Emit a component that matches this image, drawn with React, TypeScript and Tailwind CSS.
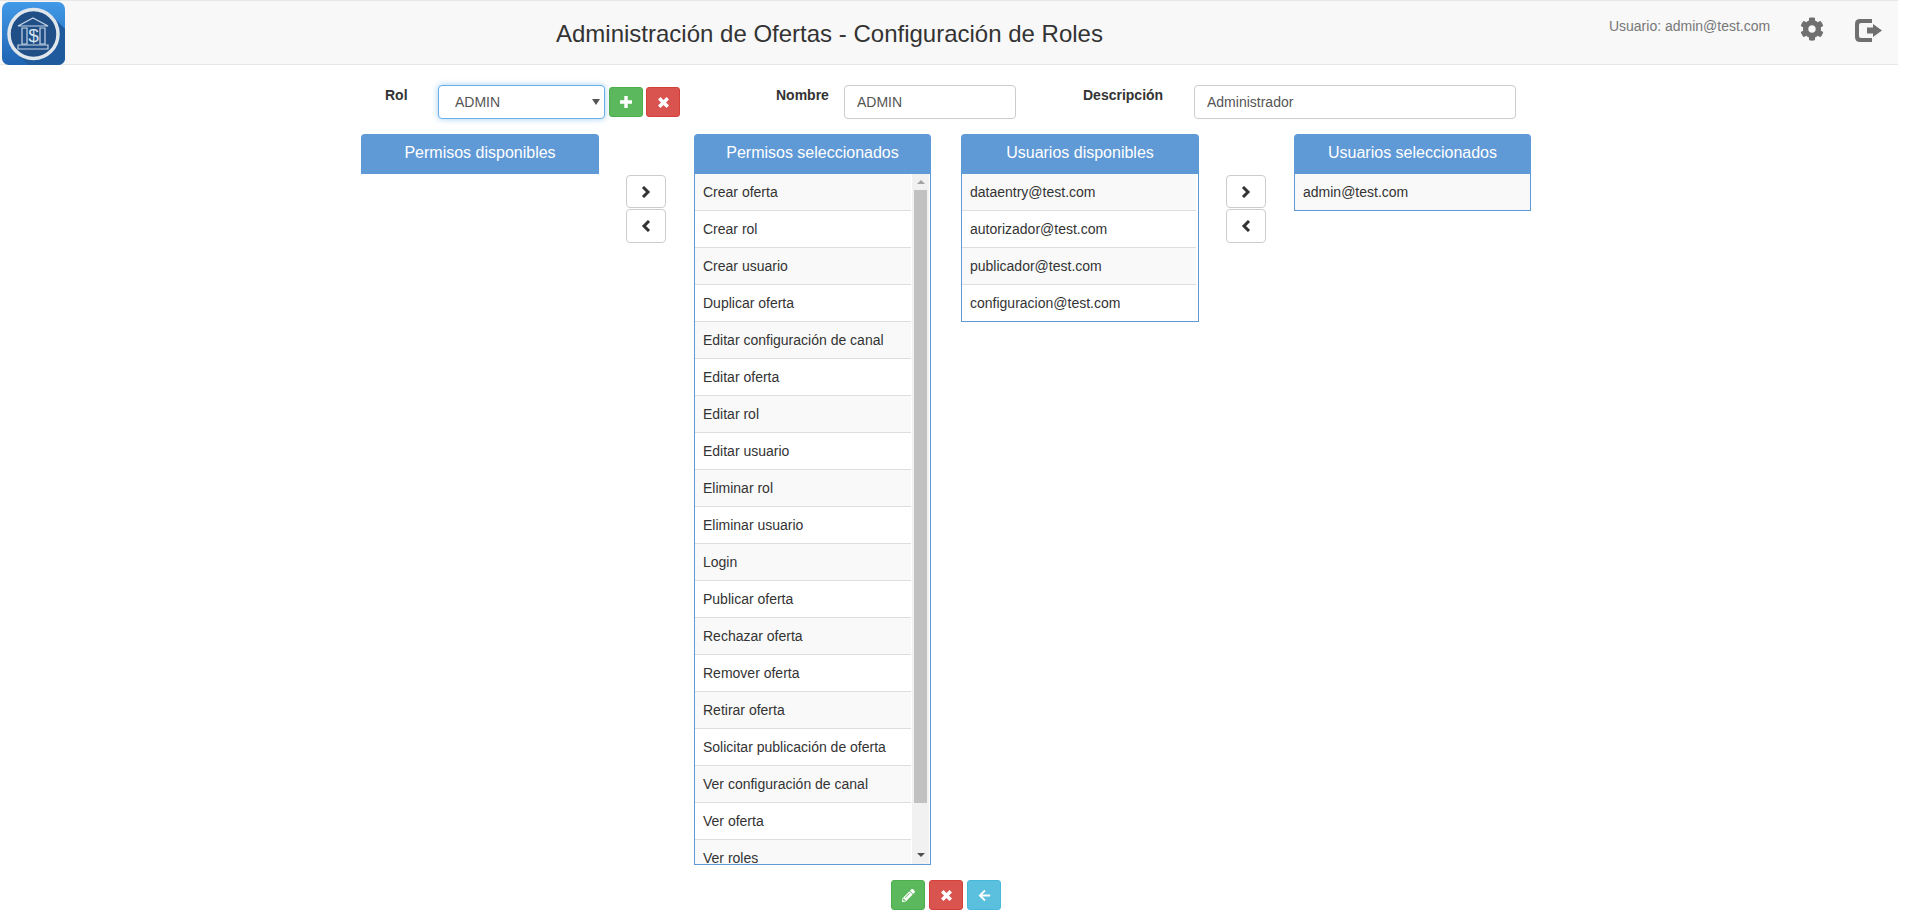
import React from 'react';
import { FaArrowLeft, FaCog, FaPencilAlt } from 'react-icons/fa';

const permisos = [
  'Crear oferta', 'Crear rol', 'Crear usuario', 'Duplicar oferta', 'Editar configuración de canal',
  'Editar oferta', 'Editar rol', 'Editar usuario', 'Eliminar rol', 'Eliminar usuario', 'Login',
  'Publicar oferta', 'Rechazar oferta', 'Remover oferta', 'Retirar oferta',
  'Solicitar publicación de oferta', 'Ver configuración de canal', 'Ver oferta', 'Ver roles',
];

const usuariosDisponibles = ['dataentry@test.com', 'autorizador@test.com', 'publicador@test.com', 'configuracion@test.com'];

const Logo: React.FC = () => (
  <svg width="63" height="63" viewBox="0 0 63 63" className="ml-[2px] mt-px shrink-0">
    <defs>
      <linearGradient id="logoBg" x1="0" y1="0" x2="0" y2="1">
        <stop offset="0" stopColor="#429ae8" />
        <stop offset="1" stopColor="#1e63b2" />
      </linearGradient>
      <clipPath id="logoClip">
        <rect width="63" height="63" rx="7" />
      </clipPath>
    </defs>
    <g clipPath="url(#logoClip)">
      <rect width="63" height="63" fill="url(#logoBg)" />
      <path d="M50 14 L63 27 V63 H26 L13 50 Z" fill="#1f5a9c" />
    </g>
    <circle cx="31.5" cy="32" r="24.5" fill="#1f4f86" stroke="#dfe6ec" strokeWidth="3.5" />
    <g fill="none" stroke="#c6d6e6" strokeWidth="1.2">
      <path d="M16 24 L31 16 L46 24 Z" />
      <path d="M20 26 H25 V42 H20 Z M38 26 H43 V42 H38 Z" />
      <path d="M16 43 H46 V47 H16 Z" />
    </g>
    <text x="31.5" y="40" textAnchor="middle" fontSize="19" fill="#d6e2ee" fontFamily="Liberation Sans, sans-serif">$</text>
  </svg>
);

const LogoutIcon: React.FC = () => (
  <svg width="27" height="23" viewBox="0 0 27 23" className="ml-[31px] mt-[18px] text-[#707070]" fill="currentColor">
    <path d="M5 0 H17 V4 H6 Q4 4 4 6 V17 Q4 19 6 19 H17 V23 H5 Q0 23 0 18 V5 Q0 0 5 0 Z" />
    <path d="M12 8.5 H18 V5 L27 11.5 L18 18 V14.5 H12 Z" />
  </svg>
);

// glyphicon-like heavy shapes
const PlusIcon: React.FC = () => (
  <svg width="12" height="12" viewBox="0 0 12 12" fill="currentColor">
    <path d="M4.3 0 H7.7 V4.3 H12 V7.7 H7.7 V12 H4.3 V7.7 H0 V4.3 H4.3 Z" />
  </svg>
);

const RemoveIcon: React.FC = () => (
  <svg width="11" height="11" viewBox="0 0 11 11" fill="currentColor">
    <path d="M2.5 0 L5.5 3 L8.5 0 L11 2.5 L8 5.5 L11 8.5 L8.5 11 L5.5 8 L2.5 11 L0 8.5 L3 5.5 L0 2.5 Z" />
  </svg>
);

const ChevronIcon: React.FC<{ left?: boolean }> = ({ left }) => (
  <svg width="10" height="12" viewBox="0 0 10 12" fill="none" stroke="currentColor" strokeWidth="3" className={left ? 'rotate-180' : ''}>
    <path d="M2 1 L7 6 L2 11" />
  </svg>
);

const PanelHeader: React.FC<{ title: string }> = ({ title }) => (
  <div className="h-[40px] pb-[3px] rounded-t bg-[#5f99d6] text-white text-base flex items-center justify-center">{title}</div>
);

const Row: React.FC<{ text: string; index: number; last?: boolean; inset?: boolean }> = ({ text, index, last, inset }) => (
  <div className={`${inset ? 'mr-[2px]' : ''} ${index % 2 === 0 ? 'bg-[#f9f9f9]' : 'bg-white'} ${last ? 'h-[36px]' : 'h-[37px] border-b border-[#dddddd]'} shrink-0 px-2 flex items-center text-sm text-[#333333] whitespace-nowrap`}>
    {text}
  </div>
);

const ArrowButtons: React.FC = () => (
  <div className="w-[40px] mt-[41px] flex flex-col gap-px">
    <button className="h-[33px] rounded border border-[#cccccc] bg-white flex items-center justify-center text-[#333333]">
      <ChevronIcon />
    </button>
    <button className="h-[34px] rounded border border-[#cccccc] bg-white flex items-center justify-center text-[#333333]">
      <ChevronIcon left />
    </button>
  </div>
);

const App: React.FC = () => {
  return (
    <div className="w-[1898px] h-[916px] bg-white font-['Liberation_Sans',Arial,sans-serif] text-[#333333] overflow-hidden">
      <header className="h-[65px] bg-[#f8f8f8] border-y border-[#e7e7e7] flex items-start -mb-px">
        <Logo />
        <h1 className="ml-[491px] mt-[18px] text-2xl leading-[30px] font-normal text-[#333333] whitespace-nowrap">
          Administración de Ofertas - Configuración de Roles
        </h1>
        <div className="ml-[506px] mt-[15px] text-sm leading-5 text-[#777777] whitespace-nowrap">Usuario: admin@test.com</div>
        <FaCog size={24} className="ml-[30px] mt-[16px] text-[#707070]" />
        <LogoutIcon />
      </header>

      <div className="mt-[21px] h-[49px] pl-[385px] flex items-start text-sm">
        <label className="w-[53px] font-bold leading-5">Rol</label>
        <div className="relative w-[167px] h-[34px]">
          <select className="w-full h-full appearance-none rounded border border-[#66afe9] bg-white pl-4 text-sm text-[#555555] shadow-[0_0_6px_rgba(102,175,233,0.6)] outline-none">
            <option>ADMIN</option>
          </select>
          <span className="absolute right-[5px] top-[14px] w-0 h-0 border-x-[4px] border-x-transparent border-t-[6px] border-t-[#555555]" />
        </div>
        <button className="ml-[4px] mt-[2px] w-[34px] h-[30px] rounded-[3px] border border-[#4cae4c] bg-[#5cb85c] text-white flex items-center justify-center">
          <PlusIcon />
        </button>
        <button className="ml-[3px] mt-[2px] w-[34px] h-[30px] rounded-[3px] border border-[#d43f3a] bg-[#d9534f] text-white flex items-center justify-center">
          <RemoveIcon />
        </button>
        <label className="ml-[96px] w-[68px] font-bold leading-5">Nombre</label>
        <input readOnly value="ADMIN" className="w-[172px] h-[34px] rounded border border-[#cccccc] px-3 text-sm text-[#555555] outline-none" />
        <label className="ml-[67px] w-[111px] font-bold leading-5">Descripción</label>
        <input readOnly value="Administrador" className="w-[322px] h-[34px] rounded border border-[#cccccc] px-3 text-sm text-[#555555] outline-none" />
      </div>

      <div className="pl-[361px] flex items-start">
        <div className="w-[238px]">
          <PanelHeader title="Permisos disponibles" />
        </div>
        <div className="ml-[27px]">
          <ArrowButtons />
        </div>
        <div className="ml-[28px] w-[237px]">
          <PanelHeader title="Permisos seleccionados" />
          <div className="h-[691px] flex border-x border-b border-[#5f99d6] overflow-hidden">
            <div className="flex-1 min-w-0 flex flex-col overflow-hidden pr-px">
              {permisos.map((p, i) => (
                <Row key={p} text={p} index={i} />
              ))}
            </div>
            <div className="w-[17px] mr-px shrink-0 bg-[#f1f1f1] flex flex-col items-center">
              <span className="mt-[6px] w-0 h-0 border-x-[4px] border-x-transparent border-b-[4px] border-b-[#a3a3a3]" />
              <div className="mt-[6px] w-[13px] h-[613px] bg-[#c1c1c1]" />
              <span className="mt-auto mb-[7px] w-0 h-0 border-x-[4px] border-x-transparent border-t-[4px] border-t-[#505050]" />
            </div>
          </div>
        </div>
        <div className="ml-[30px] w-[238px]">
          <PanelHeader title="Usuarios disponibles" />
          <div className="border-x border-b border-[#5f99d6] flex flex-col">
            {usuariosDisponibles.map((u, i) => (
              <Row key={u} text={u} index={i} last={i === usuariosDisponibles.length - 1} inset={i < usuariosDisponibles.length - 1} />
            ))}
          </div>
        </div>
        <div className="ml-[27px]">
          <ArrowButtons />
        </div>
        <div className="ml-[28px] w-[237px]">
          <PanelHeader title="Usuarios seleccionados" />
          <div className="border-x border-b border-[#5f99d6]">
            <Row text="admin@test.com" index={0} last />
          </div>
        </div>
      </div>

      <div className="mt-[15px] pl-[891px] flex gap-1">
        <button className="w-[34px] h-[30px] rounded-[3px] border border-[#4cae4c] bg-[#5cb85c] text-white flex items-center justify-center">
          <FaPencilAlt size={13} />
        </button>
        <button className="w-[34px] h-[30px] rounded-[3px] border border-[#d43f3a] bg-[#d9534f] text-white flex items-center justify-center">
          <RemoveIcon />
        </button>
        <button className="w-[34px] h-[30px] rounded-[3px] border border-[#46b8da] bg-[#5bc0de] text-white flex items-center justify-center">
          <FaArrowLeft size={13} />
        </button>
      </div>
    </div>
  );
};

export default App;
